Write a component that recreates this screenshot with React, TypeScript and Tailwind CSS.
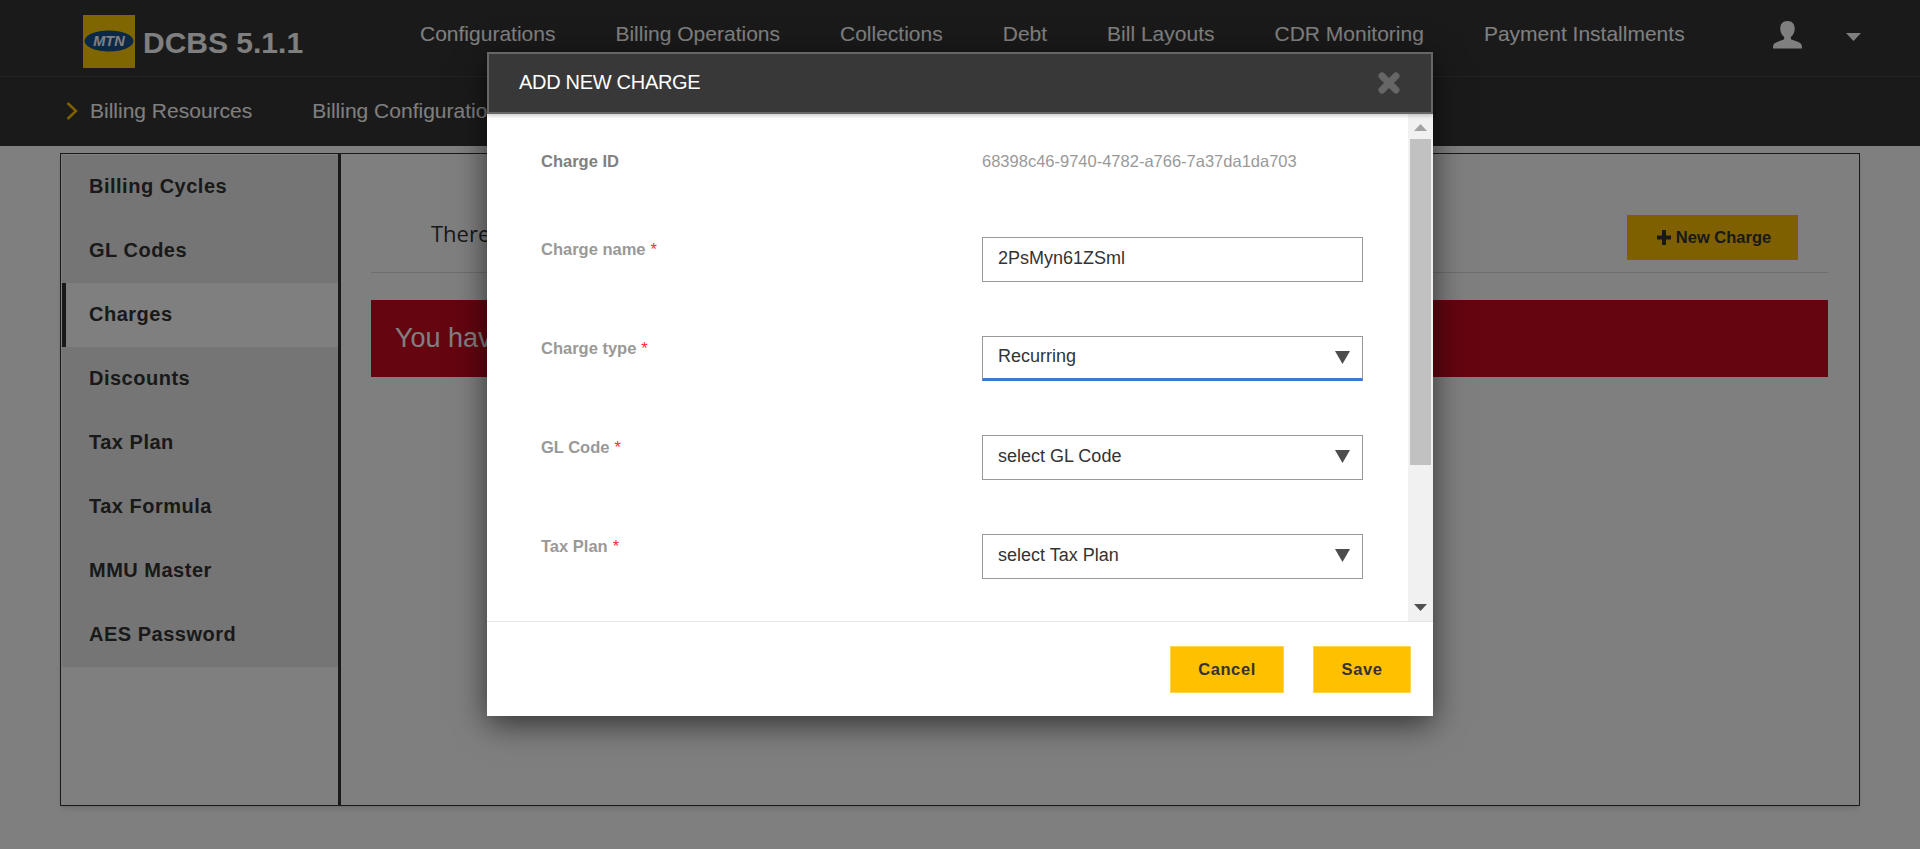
import React from 'react';

const topNav = ['Configurations', 'Billing Operations', 'Collections', 'Debt', 'Bill Layouts', 'CDR Monitoring', 'Payment Installments'];
const sideNav = ['Billing Cycles', 'GL Codes', 'Charges', 'Discounts', 'Tax Plan', 'Tax Formula', 'MMU Master', 'AES Password'];

const Label = ({ text, required }: { text: string; required?: boolean }) => (
  <div className="w-[441px] text-[16.500px] font-bold text-[#999] pt-[2px] leading-[20px]">
    {text}
    {required && <span className="text-red-500 font-normal ml-[5px]">*</span>}
  </div>
);

const Select = ({ value, active }: { value: string; active?: boolean }) => (
  <div className="relative w-[381px]">
    <select
      defaultValue={value}
      className={`appearance-none w-full h-[45px] pl-[15px] pb-[3px] bg-white text-[18px] text-[#333] outline-none border border-[#999] ${
        active ? 'border-b-[3px] border-b-[#3b78d8]' : ''
      }`}
    >
      <option>{value}</option>
    </select>
    <svg className="absolute right-[13px] top-[15px] w-[15px] h-[13px]" viewBox="0 0 15 13">
      <path d="M0 0h15L7.500 13z" fill="#4d4d4d" />
    </svg>
  </div>
);

export default function App() {
  return (
    <div className="relative h-[849px] overflow-hidden bg-white font-['Liberation_Sans',Arial,sans-serif]">
      {/* Header */}
      <header className="bg-[#353535]">
        <div className="h-[77px] flex border-b border-[#444] text-white">
          <div className="flex items-center ml-[83px] w-[337px] pt-[6px]">
            <div className="w-[52px] h-[53px] bg-[#ffcc00] flex items-center justify-center">
              <svg width="50" height="22" viewBox="0 0 50 22">
                <ellipse cx="25" cy="11" rx="24.500" ry="10.500" fill="#16508c" />
                <text x="25" y="16" textAnchor="middle" fontSize="14.500" fontWeight="700" fontStyle="italic" fill="#fff" fontFamily="Liberation Sans">
                  MTN
                </text>
              </svg>
            </div>
            <span className="ml-[8px] mt-[2px] text-[30px] font-bold">DCBS 5.1.1</span>
          </div>
          <nav className="flex gap-[60px] pt-[22px] text-[21px] leading-[24px]">
            {topNav.map((item) => (
              <a key={item} className="whitespace-nowrap">{item}</a>
            ))}
          </nav>
          <div className="ml-[88px] pt-[21px] flex">
            <svg className="w-[29px] h-[28px]" viewBox="0 0 26 29" preserveAspectRatio="none" fill="#fff">
              <path d="M13 0c4.500 0 6.500 3.500 6.500 8 0 3.500-1.500 7-3.500 8.500v2.500c3 1.500 7 2.500 9 4.500.8.800 1 3 1 5H0c0-2 .2-4.200 1-5 2-2 6-3 9-4.500v-2.500C8 15 6.500 11.500 6.500 8 6.500 3.500 8.500 0 13 0z" />
            </svg>
            <svg className="ml-[44px] mt-[12px] w-[15px] h-[8px]" viewBox="0 0 15 8" fill="#fff">
              <path d="M0 0h15L7.500 8z" />
            </svg>
          </div>
        </div>
        <div className="h-[69px] flex items-center pb-[2px] text-white text-[21px]">
          <svg className="ml-[66px] w-[12px] h-[18px]" viewBox="0 0 12 18" fill="none" stroke="#ffc000" strokeWidth="2.500">
            <path d="M1.500 1 10 9l-8.500 8" />
          </svg>
          <a className="ml-[12px]">Billing Resources</a>
          <a className="ml-[60px]">Billing Configurations</a>
        </div>
      </header>

      {/* Page body */}
      <main className="mx-[60px] mt-[7px] h-[653px] flex border border-[#333] bg-white shadow-md">
        <aside className="w-[280px] border-r-[3px] border-[#333] pt-[1px] pl-[1px]">
          {sideNav.map((item) => (
            <div
              key={item}
              className={`h-[64px] flex items-center pb-[2px] text-[20px] font-bold tracking-[0.5px] text-[#333] ${
                item === 'Charges' ? 'bg-white border-l-4 border-[#333] pl-[23px]' : 'bg-[#ebebeb] pl-[27px]'
              }`}
            >
              {item}
            </div>
          ))}
        </aside>
        <section className="flex-1 pl-[30px] pr-[31px]">
          <div className="h-[119px] flex items-start justify-between border-b border-[#ddd]">
            <span className="pl-[60px] pt-[64px] font-['Open_Sans',sans-serif] text-[22px] leading-[30px] text-[#333]">There are no charges</span>
            <button className="w-[171px] h-[45px] mr-[30px] mt-[61px] pl-[3px] bg-[#ffc000] flex items-center justify-center gap-[5px] text-[16.500px] font-bold text-[#333]">
              <svg className="w-[14px] h-[15px]" viewBox="0 0 14 15" fill="#333">
                <path d="M5 0h4v5.500h5v4H9V15H5V9.500H0v-4h5z" />
              </svg>
              New Charge
            </button>
          </div>
          <div className="mt-[27px] h-[77px] bg-[#c80a20] text-white text-[27px] flex items-center pl-[24px]">
            You have no charges
          </div>
        </section>
      </main>

      {/* Dim layer + dialog */}
      <div className="absolute inset-0 bg-black/50 flex justify-center pt-[52px]">
        <div className="w-[946px] h-[664px] bg-white flex flex-col shadow-[0_8px_30px_rgba(0,0,0,0.6)]">
          <div className="relative z-10 h-[62px] shrink-0 bg-[#383838] border-2 border-[#666] shadow-[0_2px_4px_rgba(0,0,0,0.2)] flex items-center justify-between pl-[30px] pr-[31px]">
            <h2 className="text-[20px] text-white tracking-[-0.3px] pb-[2px]">ADD NEW CHARGE</h2>
            <svg className="w-[22px] h-[22px]" viewBox="0 0 22 22" stroke="#666" strokeWidth="7" strokeLinecap="round">
              <path d="M4 4 18 18M18 4 4 18" />
            </svg>
          </div>

          <div className="h-[508px] flex border-b border-[#e5e5e5]">
            <form className="flex-1 pl-[54px] pt-[36px]">
              <div className="flex h-[87px]">
                <div className="w-[441px] text-[16.500px] font-bold text-[#808080] leading-[22px]">Charge ID</div>
                <div className="text-[16.500px] text-[#999] leading-[22px]">68398c46-9740-4782-a766-7a37da1da703</div>
              </div>
              <div className="flex h-[99px]">
                <Label text="Charge name" required />
                <input
                  readOnly
                  value="2PsMyn61ZSml"
                  className="w-[381px] h-[45px] border border-[#999] pl-[15px] pb-[3px] text-[18px] text-[#333] outline-none"
                />
              </div>
              <div className="flex h-[99px]">
                <Label text="Charge type" required />
                <Select value="Recurring" active />
              </div>
              <div className="flex h-[99px]">
                <Label text="GL Code" required />
                <Select value="select GL Code" />
              </div>
              <div className="flex h-[99px]">
                <Label text="Tax Plan" required />
                <Select value="select Tax Plan" />
              </div>
            </form>
            {/* scrollbar */}
            <div className="w-[25px] shrink-0 bg-[#f1f1f1] flex flex-col items-center">
              <svg className="mt-[10px] w-[13px] h-[7px]" viewBox="0 0 13 7" fill="#a3a3a3">
                <path d="M0 7h13L6.500 0z" />
              </svg>
              <div className="mt-[8px] w-[21px] h-[326px] bg-[#c1c1c1]" />
              <svg className="mt-auto mb-[10px] w-[13px] h-[7px]" viewBox="0 0 13 7" fill="#505050">
                <path d="M0 0h13L6.500 7z" />
              </svg>
            </div>
          </div>

          <div className="flex-1 flex justify-end items-start pt-[24px] pr-[22px] gap-[29px]">
            <button className="w-[114px] h-[47px] bg-[#ffc000] border border-[#ffd34d] text-[16.500px] font-bold tracking-[0.6px] text-[#333]">Cancel</button>
            <button className="w-[98px] h-[47px] bg-[#ffc000] border border-[#ffd34d] text-[16.500px] font-bold tracking-[0.6px] text-[#333]">Save</button>
          </div>
        </div>
      </div>
    </div>
  );
}
